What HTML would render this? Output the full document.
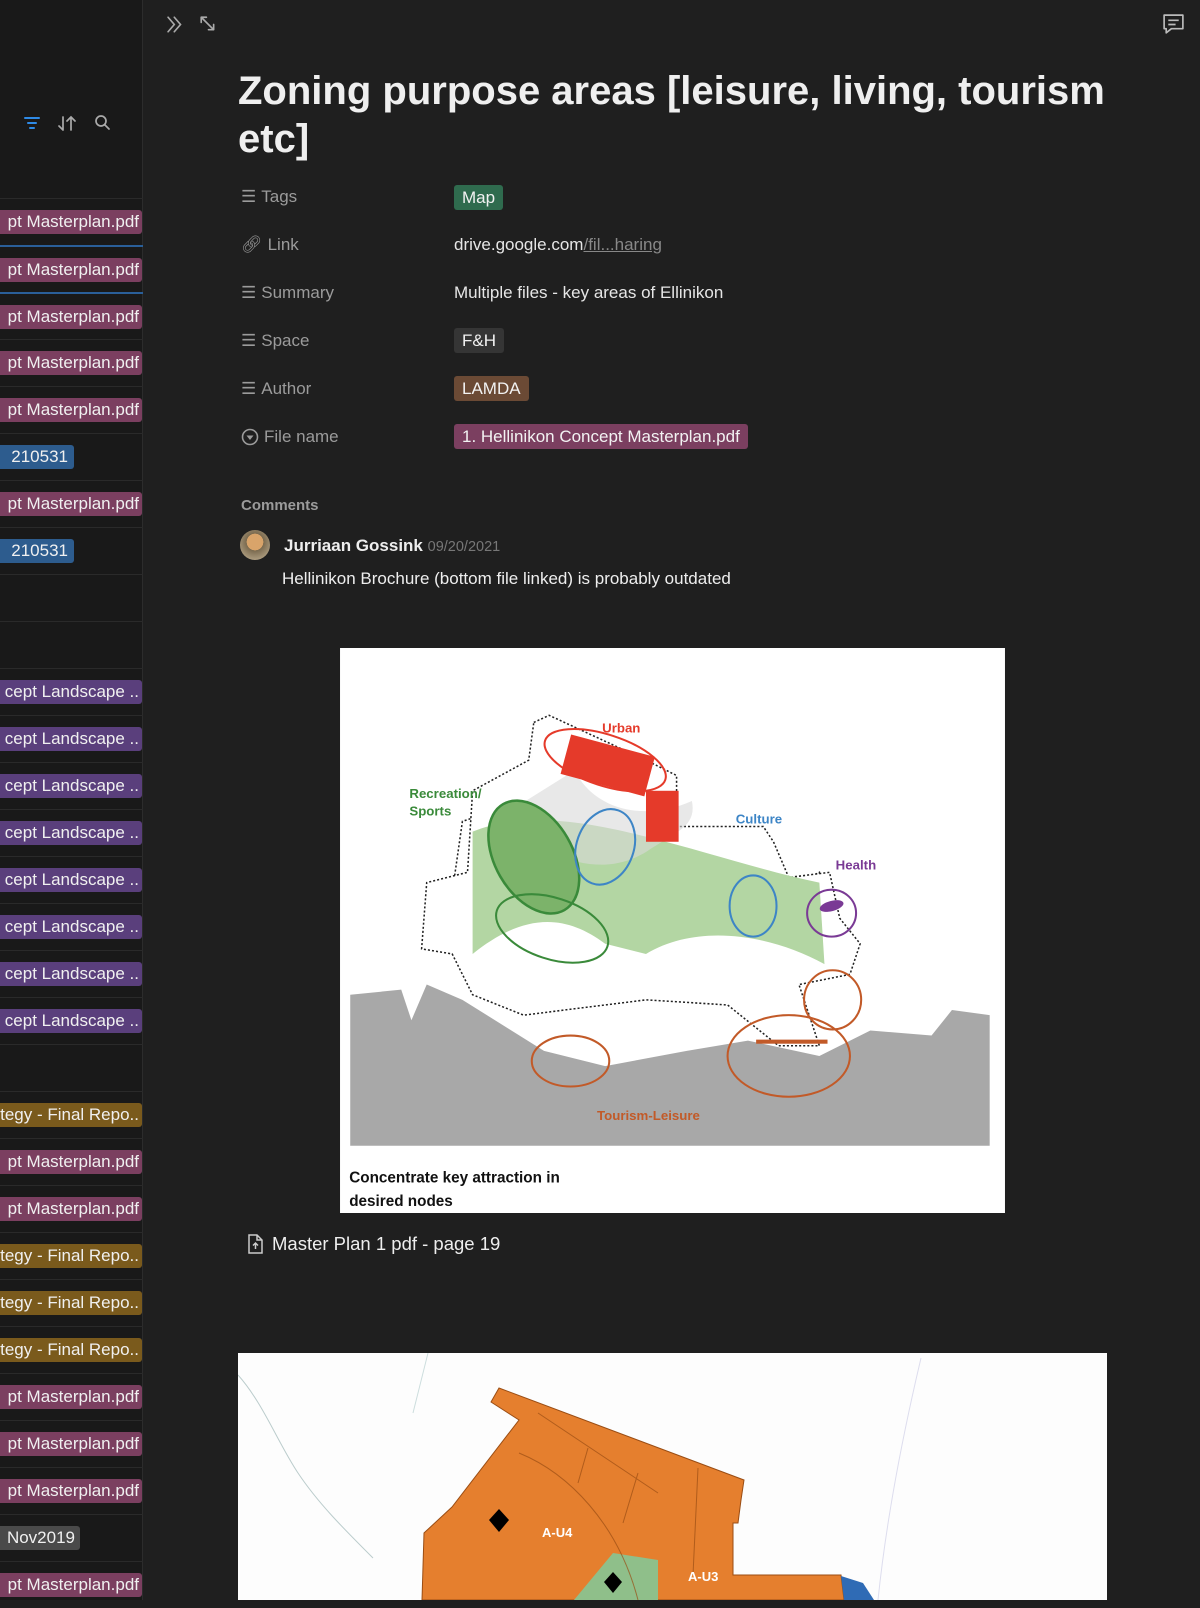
<!DOCTYPE html>
<html><head><meta charset="utf-8"><style>
*{margin:0;padding:0;box-sizing:border-box}
body{width:1200px;height:1600px;background:#1f1f1f;font-family:"Liberation Sans",sans-serif;color:#e6e6e6;position:relative;overflow:hidden}
#side{position:absolute;left:0;top:0;width:143px;height:1600px;background:#191919;border-right:1px solid #2c2c2c}
.row{position:absolute;left:0;width:143px;height:47px;border-top:1px solid #2a2a2a}
.tag{position:absolute;top:11px;height:24px;line-height:24px;font-size:17px;color:#f0f0f0;white-space:nowrap;border-radius:0 3px 3px 0;padding-right:3px;overflow:hidden}
.pk{background:#7b3f60;left:0;width:142px;text-align:right}
.bl{background:#2d5c8e;left:0;width:74px;text-align:right;padding-right:6px}
.pu{background:#5a3f7c;left:0;width:142px;text-align:right}
.go{background:#7a5a1c;left:0;width:142px;text-align:right}
.gr{background:#4a4a4a;left:0;width:80px;text-align:right;padding-right:5px}
.prop{position:absolute;left:241px;font-size:17px;color:#9b9b9b;display:flex;align-items:center;gap:5px}
.val{position:absolute;left:454px;font-size:17px;color:#e6e6e6}
.pill{display:inline-block;padding:0 8px;height:25px;line-height:25px;border-radius:3px;color:#f2f2f2}
</style></head><body>
<div id="side">
 <svg style="position:absolute;left:23px;top:114px" width="100" height="18" viewBox="0 0 100 18"><g stroke="#2e8ae6" stroke-width="2" stroke-linecap="round"><line x1="2" y1="4" x2="16" y2="4"/><line x1="5" y1="9" x2="13" y2="9"/><line x1="7" y1="14" x2="11" y2="14"/></g>
 <g stroke="#aaa" stroke-width="1.7" fill="none" stroke-linecap="round"><path d="M40 3v13M36 12l4 4M48 16V3M44 7l4-4 4 4"/><circle cx="78" cy="7" r="5"/><path d="M82 11l4 4"/></g></svg>
 <div class="row" style="top:198px"><div class="tag pk">pt Masterplan.pdf</div></div>
 <div class="row" style="top:245px;border-top:2px solid #2a5f99"><div class="tag pk">pt Masterplan.pdf</div></div>
 <div class="row" style="top:292px;border-top:2px solid #2a5f99"><div class="tag pk">pt Masterplan.pdf</div></div>
 <div class="row" style="top:339px"><div class="tag pk">pt Masterplan.pdf</div></div>
 <div class="row" style="top:386px"><div class="tag pk">pt Masterplan.pdf</div></div>
 <div class="row" style="top:433px"><div class="tag bl">210531</div></div>
 <div class="row" style="top:480px"><div class="tag pk">pt Masterplan.pdf</div></div>
 <div class="row" style="top:527px"><div class="tag bl">210531</div></div>
 <div class="row" style="top:574px"></div>
 <div class="row" style="top:621px"></div>
 <div class="row" style="top:668px"><div class="tag pu">cept Landscape ..</div></div>
 <div class="row" style="top:715px"><div class="tag pu">cept Landscape ..</div></div>
 <div class="row" style="top:762px"><div class="tag pu">cept Landscape ..</div></div>
 <div class="row" style="top:809px"><div class="tag pu">cept Landscape ..</div></div>
 <div class="row" style="top:856px"><div class="tag pu">cept Landscape ..</div></div>
 <div class="row" style="top:903px"><div class="tag pu">cept Landscape ..</div></div>
 <div class="row" style="top:950px"><div class="tag pu">cept Landscape ..</div></div>
 <div class="row" style="top:997px"><div class="tag pu">cept Landscape ..</div></div>
 <div class="row" style="top:1044px"></div>
 <div class="row" style="top:1091px"><div class="tag go">tegy - Final Repo..</div></div>
 <div class="row" style="top:1138px"><div class="tag pk">pt Masterplan.pdf</div></div>
 <div class="row" style="top:1185px"><div class="tag pk">pt Masterplan.pdf</div></div>
 <div class="row" style="top:1232px"><div class="tag go">tegy - Final Repo..</div></div>
 <div class="row" style="top:1279px"><div class="tag go">tegy - Final Repo..</div></div>
 <div class="row" style="top:1326px"><div class="tag go">tegy - Final Repo..</div></div>
 <div class="row" style="top:1373px"><div class="tag pk">pt Masterplan.pdf</div></div>
 <div class="row" style="top:1420px"><div class="tag pk">pt Masterplan.pdf</div></div>
 <div class="row" style="top:1467px"><div class="tag pk">pt Masterplan.pdf</div></div>
 <div class="row" style="top:1514px"><div class="tag gr">Nov2019</div></div>
 <div class="row" style="top:1561px"><div class="tag pk">pt Masterplan.pdf</div></div>
</div>

<svg style="position:absolute;left:166px;top:14px" width="58" height="21" viewBox="0 0 56 20"><g stroke="#aaa" stroke-width="1.6" fill="none" stroke-linecap="round"><path d="M2 3l6 7-6 7M8 3l6 7-6 7"/><path d="M34 3l12 12M34 3v5M34 3h5M46 15v-5M46 15h-5"/></g></svg>
<svg style="position:absolute;left:1161px;top:13px" width="25" height="23" viewBox="0 0 24 22"><path d="M3 2h18v13H10l-5 4v-4H3z" stroke="#bbb" stroke-width="1.6" fill="none" stroke-linejoin="round"/><path d="M7 7h10M7 11h7" stroke="#bbb" stroke-width="1.6"/></svg>

<div style="position:absolute;left:238px;top:67px;width:900px;font-size:40px;font-weight:bold;line-height:48px;color:#efefef">Zoning purpose areas [leisure, living, tourism etc]</div>

<div class="prop" style="top:187px"><span style="font-size:17px">☰</span>Tags</div>
<div class="val" style="top:185px"><span class="pill" style="background:#2f6b4e">Map</span></div>
<div class="prop" style="top:235px"><span>🔗︎</span>Link</div>
<div class="val" style="top:235px">drive.google.com<span style="color:#888;text-decoration:underline">/fil...haring</span></div>
<div class="prop" style="top:283px"><span style="font-size:17px">☰</span>Summary</div>
<div class="val" style="top:283px">Multiple files - key areas of Ellinikon</div>
<div class="prop" style="top:331px"><span style="font-size:17px">☰</span>Space</div>
<div class="val" style="top:328px"><span class="pill" style="background:#353535">F&amp;H</span></div>
<div class="prop" style="top:379px"><span style="font-size:17px">☰</span>Author</div>
<div class="val" style="top:376px"><span class="pill" style="background:#6b4a35">LAMDA</span></div>
<div class="prop" style="top:427px"><svg width="18" height="18"><circle cx="9" cy="9" r="7.5" stroke="#9b9b9b" stroke-width="1.6" fill="none"/><path d="M5.5 7.5h7L9 12z" fill="#9b9b9b"/></svg>File name</div>
<div class="val" style="top:424px"><span class="pill" style="background:#7b3f60">1. Hellinikon Concept Masterplan.pdf</span></div>

<div style="position:absolute;left:241px;top:497px;font-size:15px;font-weight:bold;color:#9b9b9b">Comments</div>
<div style="position:absolute;left:240px;top:530px;width:30px;height:30px;border-radius:50%;background:radial-gradient(circle at 50% 40%,#d9a46a 0 35%,#7a6a4f 36%,#c9b89a 100%)"></div>
<div style="position:absolute;left:284px;top:536px;font-size:17px;font-weight:bold;color:#eee">Jurriaan Gossink <span style="font-weight:normal;font-size:14.5px;color:#777">09/20/2021</span></div>
<div style="position:absolute;left:282px;top:569px;font-size:17px;color:#eee">Hellinikon Brochure (bottom file linked) is probably outdated</div>

<svg style="position:absolute;left:340px;top:648px" width="665" height="565" viewBox="0 0 652 554">
<rect width="652" height="554" fill="#fff"/>
<path d="M10 340 L60 335 70 365 85 330 120 345 160 370 200 395 260 410 340 395 400 385 470 400 520 375 580 380 600 355 637 360 637 488 10 488Z" fill="#a8a8a8"/>
<path d="M100 290 L110 240 120 170 150 160 200 200 260 190 320 240 390 230 420 245 470 220 475 290 430 320 360 300 300 330 240 320 180 320 130 320Z" fill="#fff" stroke="#222" stroke-width="1.5" stroke-dasharray="2 2"/>
<path d="M190 73 L205 66 300 110 330 125 330 175 415 175 425 190 440 225 480 220 490 265 510 290 500 320 450 330 470 390 430 390 380 350 300 345 180 360 130 340 110 300 80 295 85 230 125 220 130 140 185 110Z" fill="#fff" stroke="#222" stroke-width="1.5" stroke-dasharray="2 2"/>
<path d="M130 180 C180 160 240 170 300 185 360 200 420 220 470 230 L475 310 C420 280 350 270 300 300 L260 290 C220 260 180 260 130 300 Z" fill="#b3d6a3"/>
<path d="M150 170 C200 200 250 230 300 200 330 180 350 175 345 150 300 170 250 160 230 120 190 130 150 140Z" fill="#d8d8d8" opacity=".6"/>
<rect x="220" y="95" width="85" height="40" fill="#e53a2a" transform="rotate(15 262 115)"/>
<rect x="300" y="140" width="32" height="50" fill="#e53a2a"/>
<ellipse cx="260" cy="110" rx="62" ry="25" transform="rotate(18 260 110)" stroke="#e53a2a" stroke-width="2" fill="none"/>
<ellipse cx="190" cy="205" rx="38" ry="60" transform="rotate(-30 190 205)" stroke="#3a8a3a" stroke-width="2.5" fill="#7cb36a"/>
<ellipse cx="208" cy="275" rx="57" ry="30" transform="rotate(18 208 275)" stroke="#3a8a3a" stroke-width="2" fill="none"/>
<ellipse cx="260" cy="195" rx="28" ry="38" transform="rotate(20 260 195)" stroke="#3d85c6" stroke-width="2" fill="none"/>
<ellipse cx="405" cy="253" rx="23" ry="30" stroke="#3d85c6" stroke-width="2" fill="none"/>
<ellipse cx="482" cy="260" rx="24" ry="23" stroke="#7a3a95" stroke-width="2" fill="none"/>
<ellipse cx="482" cy="253" rx="12" ry="5" fill="#7a3a95" transform="rotate(-15 482 253)"/>
<ellipse cx="483" cy="345" rx="28" ry="29" stroke="#c25a28" stroke-width="2" fill="none"/>
<ellipse cx="226" cy="405" rx="38" ry="25" stroke="#c25a28" stroke-width="2" fill="none"/>
<ellipse cx="440" cy="400" rx="60" ry="40" stroke="#c25a28" stroke-width="2" fill="none"/>
<rect x="408" y="384" width="70" height="4" fill="#c25a28"/>
<text x="257" y="83" font-size="13" font-weight="bold" fill="#e53a2a">Urban</text>
<text x="68" y="147" font-size="13" font-weight="bold" fill="#3a8a3a">Recreation/</text>
<text x="68" y="164" font-size="13" font-weight="bold" fill="#3a8a3a">Sports</text>
<text x="388" y="172" font-size="13" font-weight="bold" fill="#3d85c6">Culture</text>
<text x="486" y="217" font-size="13" font-weight="bold" fill="#7a3a95">Health</text>
<text x="252" y="463" font-size="13" font-weight="bold" fill="#c25a28">Tourism-Leisure</text>
<text x="9" y="524" font-size="15" font-weight="bold" fill="#111">Concentrate key attraction in</text>
<text x="9" y="547" font-size="15" font-weight="bold" fill="#111">desired nodes</text>
</svg>

<div style="position:absolute;left:246px;top:1233px;font-size:18.5px;color:#eee;display:flex;align-items:center;gap:8px"><svg width="18" height="20"><path d="M3 1h8l5 5v13H3z M11 1v5h5" stroke="#ccc" stroke-width="1.5" fill="none"/><path d="M9.5 15V9M7 11.5l2.5-2.5 2.5 2.5" stroke="#ccc" stroke-width="1.5" fill="none"/></svg>Master Plan 1 pdf - page 19</div>

<svg style="position:absolute;left:238px;top:1353px" width="869" height="247" viewBox="0 0 869 247">
<rect width="869" height="247" fill="#fdfdfd"/>
<path d="M0 22 C25 50 40 90 60 120 80 150 105 175 135 205" stroke="#bcc" fill="none"/>
<path d="M190 0 C185 20 180 40 175 60" stroke="#cdd" fill="none"/>
<path d="M683 5 C670 60 650 150 640 247" stroke="#dde" fill="none"/>
<path d="M253 49 L261 35 506 127 503 147 500 170 495 170 495 222 603 222 606 247 184 247 186 180 214 154 281 67 Z" fill="#e57f2e" stroke="#9a4d14"/>
<path d="M336 247 L375 200 420 207 420 247Z" fill="#8fbf8a"/>
<path d="M603 223 L625 230 636 247 606 247Z" fill="#2f6bb5"/>
<path d="M261 156 L271 167 261 179 251 167Z" fill="#000"/>
<path d="M375 219 L384 229 375 240 366 229Z" fill="#000"/>
<g stroke="#9a4d14" stroke-width="1" fill="none" opacity=".7"><path d="M300 60 L420 140 M281 100 C330 120 380 170 400 247 M350 95 L340 130 M400 120 L385 170 M460 115 L455 222"/></g>
<text x="304" y="184" font-size="13" font-weight="bold" fill="#fff">A-U4</text>
<text x="450" y="228" font-size="13" font-weight="bold" fill="#fff">A-U3</text>
</svg>
</body></html>
